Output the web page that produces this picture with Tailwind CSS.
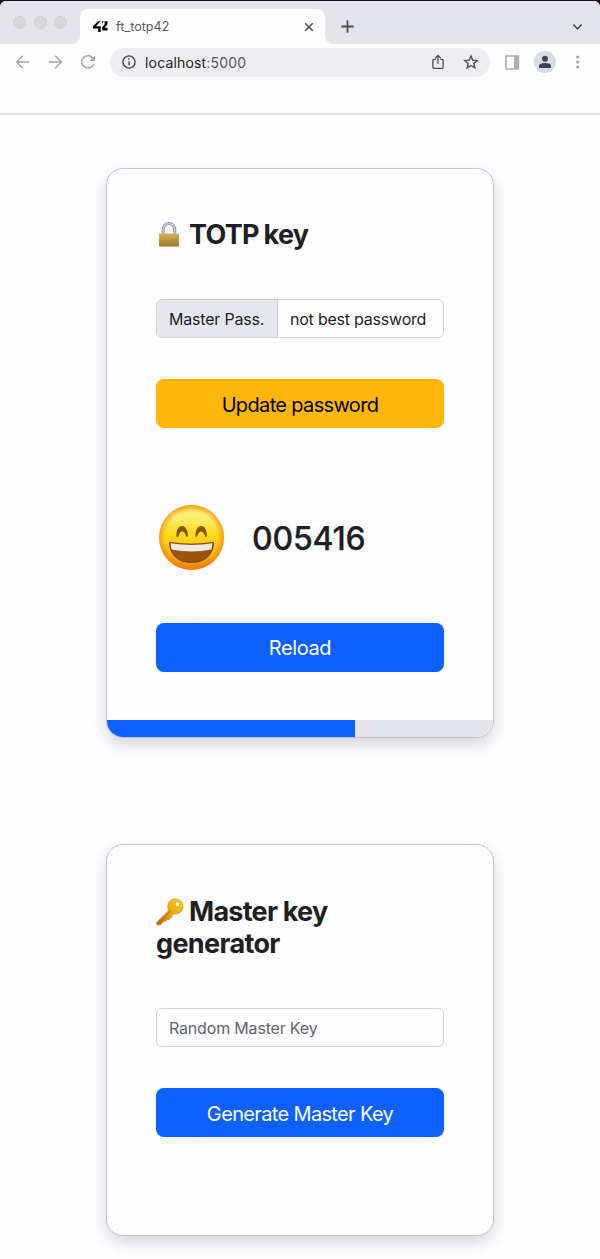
<!DOCTYPE html>
<html lang="en">
<head>
<meta charset="utf-8">
<title>ft_totp42</title>
<script src="https://cdn.jsdelivr.net/npm/@tailwindcss/browser@4"></script>
</head>
<body class="w-[600px] h-[1259px] overflow-hidden bg-[#fefdff] font-[Inter,sans-serif] text-[#1d1f24]">
<!-- Browser tab strip -->
<div class="bg-[#160f1c] h-11 pt-px">
  <div class="flex h-[43px] bg-[#fefdff] rounded-t-md overflow-hidden">
    <div class="w-20 bg-[#e4e5ea] rounded-br-lg flex gap-[7.500px] pl-[13px] pt-[15px]">
      <i class="size-[13px] rounded-full bg-[#d8d6d9] border border-[#cfcdd0]"></i>
      <i class="size-[13px] rounded-full bg-[#d8d6d9] border border-[#cfcdd0]"></i>
      <i class="size-[13px] rounded-full bg-[#d8d6d9] border border-[#cfcdd0]"></i>
    </div>
    <div class="w-[245px] bg-[#e4e5ea] pt-2">
      <div class="h-[35px] bg-[#fefdff] rounded-t-lg flex items-center pl-[13px] pr-[11px]">
        <svg class="w-[15px] h-[11px] shrink-0" viewBox="0 0 15 11" fill="#050505"><path d="M5 .3H7.500L3 5.200H7.700V11H5.200V7.500H0V5.200Z"/><path d="M9 .3H11L9 2.500ZM11.500 .3H14.500V3.300L11.600 6.700H14.500V9.500H9.100V6.300L11.700 3.300Z"/></svg>
        <span class="text-[12.500px] text-[#5a5b60] ml-[8px] flex-1"><span class="inline-block whitespace-nowrap tracking-[0.050px] pt-[2px]">ft_totp42</span></span>
        <svg class="size-[10px]" viewBox="0 0 10 10" stroke="#4b4c50" stroke-width="1.500" fill="none"><path d="M1.200 1.200l7.600 7.600M8.800 1.200L1.200 8.800"/></svg>
      </div>
    </div>
    <div class="flex-1 bg-[#e4e5ea] rounded-bl-lg flex items-center justify-between pl-4 pr-[16px] pt-[8px]">
      <svg class="size-[13px]" viewBox="0 0 13 13" stroke="#4b4c50" stroke-width="1.800"><path d="M6.500 .3v12.400M.3 6.500h12.400"/></svg>
      <svg class="w-[12px] h-[8px]" viewBox="0 0 12 8" stroke="#4b4c50" stroke-width="1.600" fill="none"><path d="M1.300 1.500L5.500 5.800l4.200-4.300"/></svg>
    </div>
  </div>
</div>
<!-- Toolbar -->
<div class="h-[71px] border-b-2 border-[#e3e3e7] pt-1">
  <div class="flex items-center h-[28px]">
    <svg class="size-4 ml-[15px]" viewBox="0 0 16 16" stroke="#a5a5a8" stroke-width="1.400" fill="none"><path d="M14.300 8H1.800M7.800 1.800L1.600 8l6.200 6.200"/></svg>
    <svg class="size-4 ml-[16px]" viewBox="0 0 16 16" stroke="#a5a5a8" stroke-width="1.400" fill="none"><path d="M1.700 8h12.500M8.200 1.800L14.400 8l-6.200 6.200"/></svg>
    <svg class="size-4 ml-[17px]" viewBox="0 0 16 16" stroke="#a5a5a8" stroke-width="1.500" fill="none"><path d="M14 9.600A6.200 6.200 0 1 1 12.600 3.600L13.700 4.800"/><path d="M15 1.600V6.900H9.600Z" fill="#a5a5a8" stroke="none"/></svg>
    <div class="ml-[14px] w-[380px] h-[29px] rounded-full bg-[#eeeef0] flex items-center pl-[12px] pr-[11px]">
      <svg class="size-[14px]" viewBox="0 0 14 14" fill="none" stroke="#45464a" stroke-width="1.400"><circle cx="7" cy="7" r="6.100"/><path d="M7 6.200v4M7 3.600v1.500"/></svg>
      <span class="ml-[9px] flex-1 text-[14px] tracking-[0.170px]"><span class="inline-block whitespace-nowrap">localhost<span class="text-[#55565a]">:5000</span></span></span>
      <svg class="w-[12px] h-[16px] mr-[19px]" viewBox="0 0 12 16" fill="none" stroke="#4b4c50" stroke-width="1.300"><path d="M3.600 5.400H1.800Q.9 5.400.9 6.300V13.200Q.9 14.300 2 14.300H10Q11.100 14.300 11.100 13.200V6.300Q11.100 5.400 10.200 5.400H8.400M6 9.800V1.500M3.200 4.200L6 1.400l2.800 2.800"/></svg>
      <svg class="size-4" viewBox="0 0 16 16" fill="none" stroke="#4b4c50" stroke-width="1.400"><path d="M8 2l1.700 4.100 4.500.4-3.400 2.900 1 4.400L8 11.500l-3.800 2.300 1-4.400-3.400-2.900 4.500-.4z"/></svg>
    </div>
    <svg class="ml-[15px] w-[15px] h-[15px]" viewBox="0 0 15 15"><path d="M1 1h12.400v13H1z" fill="none" stroke="#aeaeb1" stroke-width="1.600"/><path d="M9 1H14v13H9z" fill="#aeaeb1"/></svg>
    <div class="ml-[14px] size-[22px] rounded-full bg-[#d9dce1] flex items-center justify-center">
      <svg class="size-[14px]" viewBox="0 0 14 14" fill="#3b4556"><circle cx="7" cy="3.800" r="3"/><path d="M1 13V11Q1 8 7 8T13 11V13Z"/></svg>
    </div>
    <svg class="ml-[20px] w-[4px] h-[14px]" viewBox="0 0 4 14" fill="#a5a5a8"><circle cx="1.700" cy="2" r="1.600"/><circle cx="1.700" cy="7" r="1.600"/><circle cx="1.700" cy="12" r="1.600"/></svg>
  </div>
</div>
<!-- Page -->
<main class="flex flex-col items-center pt-[53px] gap-[106px]">
  <section class="w-[388px] h-[570px] rounded-[17px] border border-[#c2c5c8] bg-[#fefdff] shadow-[0_7px_15px_rgba(0,0,0,0.16)] overflow-hidden flex flex-col">
    <div class="px-[49px] pt-[49px] flex flex-col flex-1">
      <h1 class="flex items-center h-[33px] text-[27px] leading-[33px] font-bold">
        <svg class="w-[20px] h-[25px] ml-[3px] mr-[10px]" viewBox="0 0 20 25"><defs><linearGradient id="brass" x2="0" y2="1"><stop stop-color="#d3b25a"/><stop offset=".5" stop-color="#b9993c"/><stop offset="1" stop-color="#957522"/></linearGradient></defs><path d="M4.200 13V7.500a5.800 6 0 0 1 11.600 0V13" fill="none" stroke="#8191ab" stroke-width="3"/><path d="M4.200 13V7.500a5.800 6 0 0 1 11.600 0V13" fill="none" stroke="#c3d0e2" stroke-width="1.400"/><rect y="11.500" width="20" height="13" rx="1.200" fill="url(#brass)"/></svg>
        <span class="whitespace-nowrap tracking-[-0.700px] [word-spacing:-1px]">TOTP key</span>
      </h1>
      <div class="mt-[48px] h-[39px] flex rounded-md border border-[#ced2d8] overflow-hidden text-[16px]">
        <div class="w-[121px] bg-[#e6e7ec] border-r border-[#ced2d8] pl-[12px] flex items-center"><span class="whitespace-nowrap tracking-[-0.200px]">Master Pass.</span></div>
        <div class="flex-1 pl-[12px] flex items-center"><span class="whitespace-nowrap tracking-[-0.220px]">not best password</span></div>
      </div>
      <button class="mt-[41px] h-[49px] rounded-lg bg-[#ffb70c] text-black text-[20px] pt-[2px]"><span class="whitespace-nowrap tracking-[-0.650px]">Update password</span></button>
      <div class="mt-[76px] h-[67px] flex items-center">
        <svg class="ml-[2px] size-[67px]" viewBox="0 0 67 67"><defs><linearGradient id="face" x2="0" y2="1"><stop stop-color="#ffdf3d"/><stop offset=".15" stop-color="#fff07a"/><stop offset=".45" stop-color="#ffdc1c"/><stop offset=".75" stop-color="#ffb514"/><stop offset="1" stop-color="#f27f10"/></linearGradient><radialGradient id="rim"><stop offset=".8" stop-color="#f08010" stop-opacity="0"/><stop offset="1" stop-color="#ed7a0c" stop-opacity=".65"/></radialGradient></defs><circle cx="33.500" cy="33.500" r="32.500" fill="url(#face)"/><circle cx="33.500" cy="33.500" r="32.500" fill="url(#rim)"/><g fill="#8d530a"><path d="M18.300 32C18.500 25 21 22 24 22S29.600 25 30 32Q29.300 33.800 28 32C27 28.500 25.500 27.500 24 27.500S21.500 28.500 20.700 32Q19.200 33.800 18.300 32Z"/><path d="M37.300 32C37.700 25 40.200 22 43.200 22S48.700 25 49 32Q48.200 33.800 46.800 32C46 28.500 44.700 27.500 43.200 27.500S40.400 28.500 39.300 32Q38.200 33.800 37.300 32Z"/></g><path d="M11.500 38.300Q33.500 42 55.500 38.300C55.500 51.500 46 58.500 33.500 58.500S11.500 51.500 11.500 38.300Z" fill="#99560a" stroke="#7d4708" stroke-width="1"/><path d="M12.500 39.300Q33.500 42.500 54.500 39.300L53.300 45.500Q33.500 49.500 13.700 45.500Z" fill="#eee9e9"/></svg>
        <span class="ml-[27px] text-[32px] font-medium pt-[3px]"><span class="inline-block whitespace-nowrap tracking-[-0.200px] [-webkit-text-stroke:0.250px_#1d1f24]">005416</span></span>
      </div>
      <button class="mt-[52px] h-[49px] rounded-lg bg-[#0b60ff] text-white text-[20px]"><span class="whitespace-nowrap tracking-[-0.400px]">Reload</span></button>
    </div>
    <div class="h-[17px] shrink-0 bg-[#e5e6eb]"><div class="h-full w-[248px] bg-[#0b60ff]"></div></div>
  </section>
  <section class="w-[388px] h-[392px] rounded-[17px] border border-[#c2c5c8] bg-[#fefdff] shadow-[0_7px_15px_rgba(0,0,0,0.16)] px-[49px] pt-[50px] flex flex-col">
    <h2 class="text-[27px] leading-[32.500px] font-bold">
      <span class="flex items-center"><svg class="w-[28px] h-[28px] mr-[5px]" viewBox="0 0 28 28"><defs><linearGradient id="gold" x1="1" x2="0" y2="1"><stop stop-color="#ffd21b"/><stop offset=".6" stop-color="#e5a00c"/><stop offset="1" stop-color="#a96805"/></linearGradient></defs><path fill-rule="evenodd" fill="url(#gold)" stroke="#b67a08" stroke-width=".5" d="M17.500 1C23 .2 27 3.500 27 8.500S23 16.500 18 15.800L15.800 17.800L15.500 20L13.500 19.800L13 22L10.800 21.600L9.500 23.500L7.500 23.300L5 26.500L1 27L.5 24.500L12.500 12.500C10.500 6.500 13 1.800 17.500 1ZM21.500 4a2.300 2.300 0 1 0 .1 0Z"/><path d="M2.500 25L14.500 13" stroke="#a86b09" stroke-width="1"/></svg><span class="whitespace-nowrap tracking-[-0.750px] pt-px">Master key</span></span>
      <span class="block whitespace-nowrap tracking-[-0.650px] -mt-px">generator</span>
    </h2>
    <div class="mt-[48px] h-[39px] rounded-md border border-[#ced2d8] text-[16px] text-[#63656b] pl-[12px] flex items-center"><span class="whitespace-nowrap tracking-[-0.180px]">Random Master Key</span></div>
    <button class="mt-[41px] h-[49px] rounded-lg bg-[#0b60ff] text-white text-[20px] pt-[2px]"><span class="whitespace-nowrap tracking-[-0.650px]">Generate Master Key</span></button>
  </section>
</main>
</body>
</html>
